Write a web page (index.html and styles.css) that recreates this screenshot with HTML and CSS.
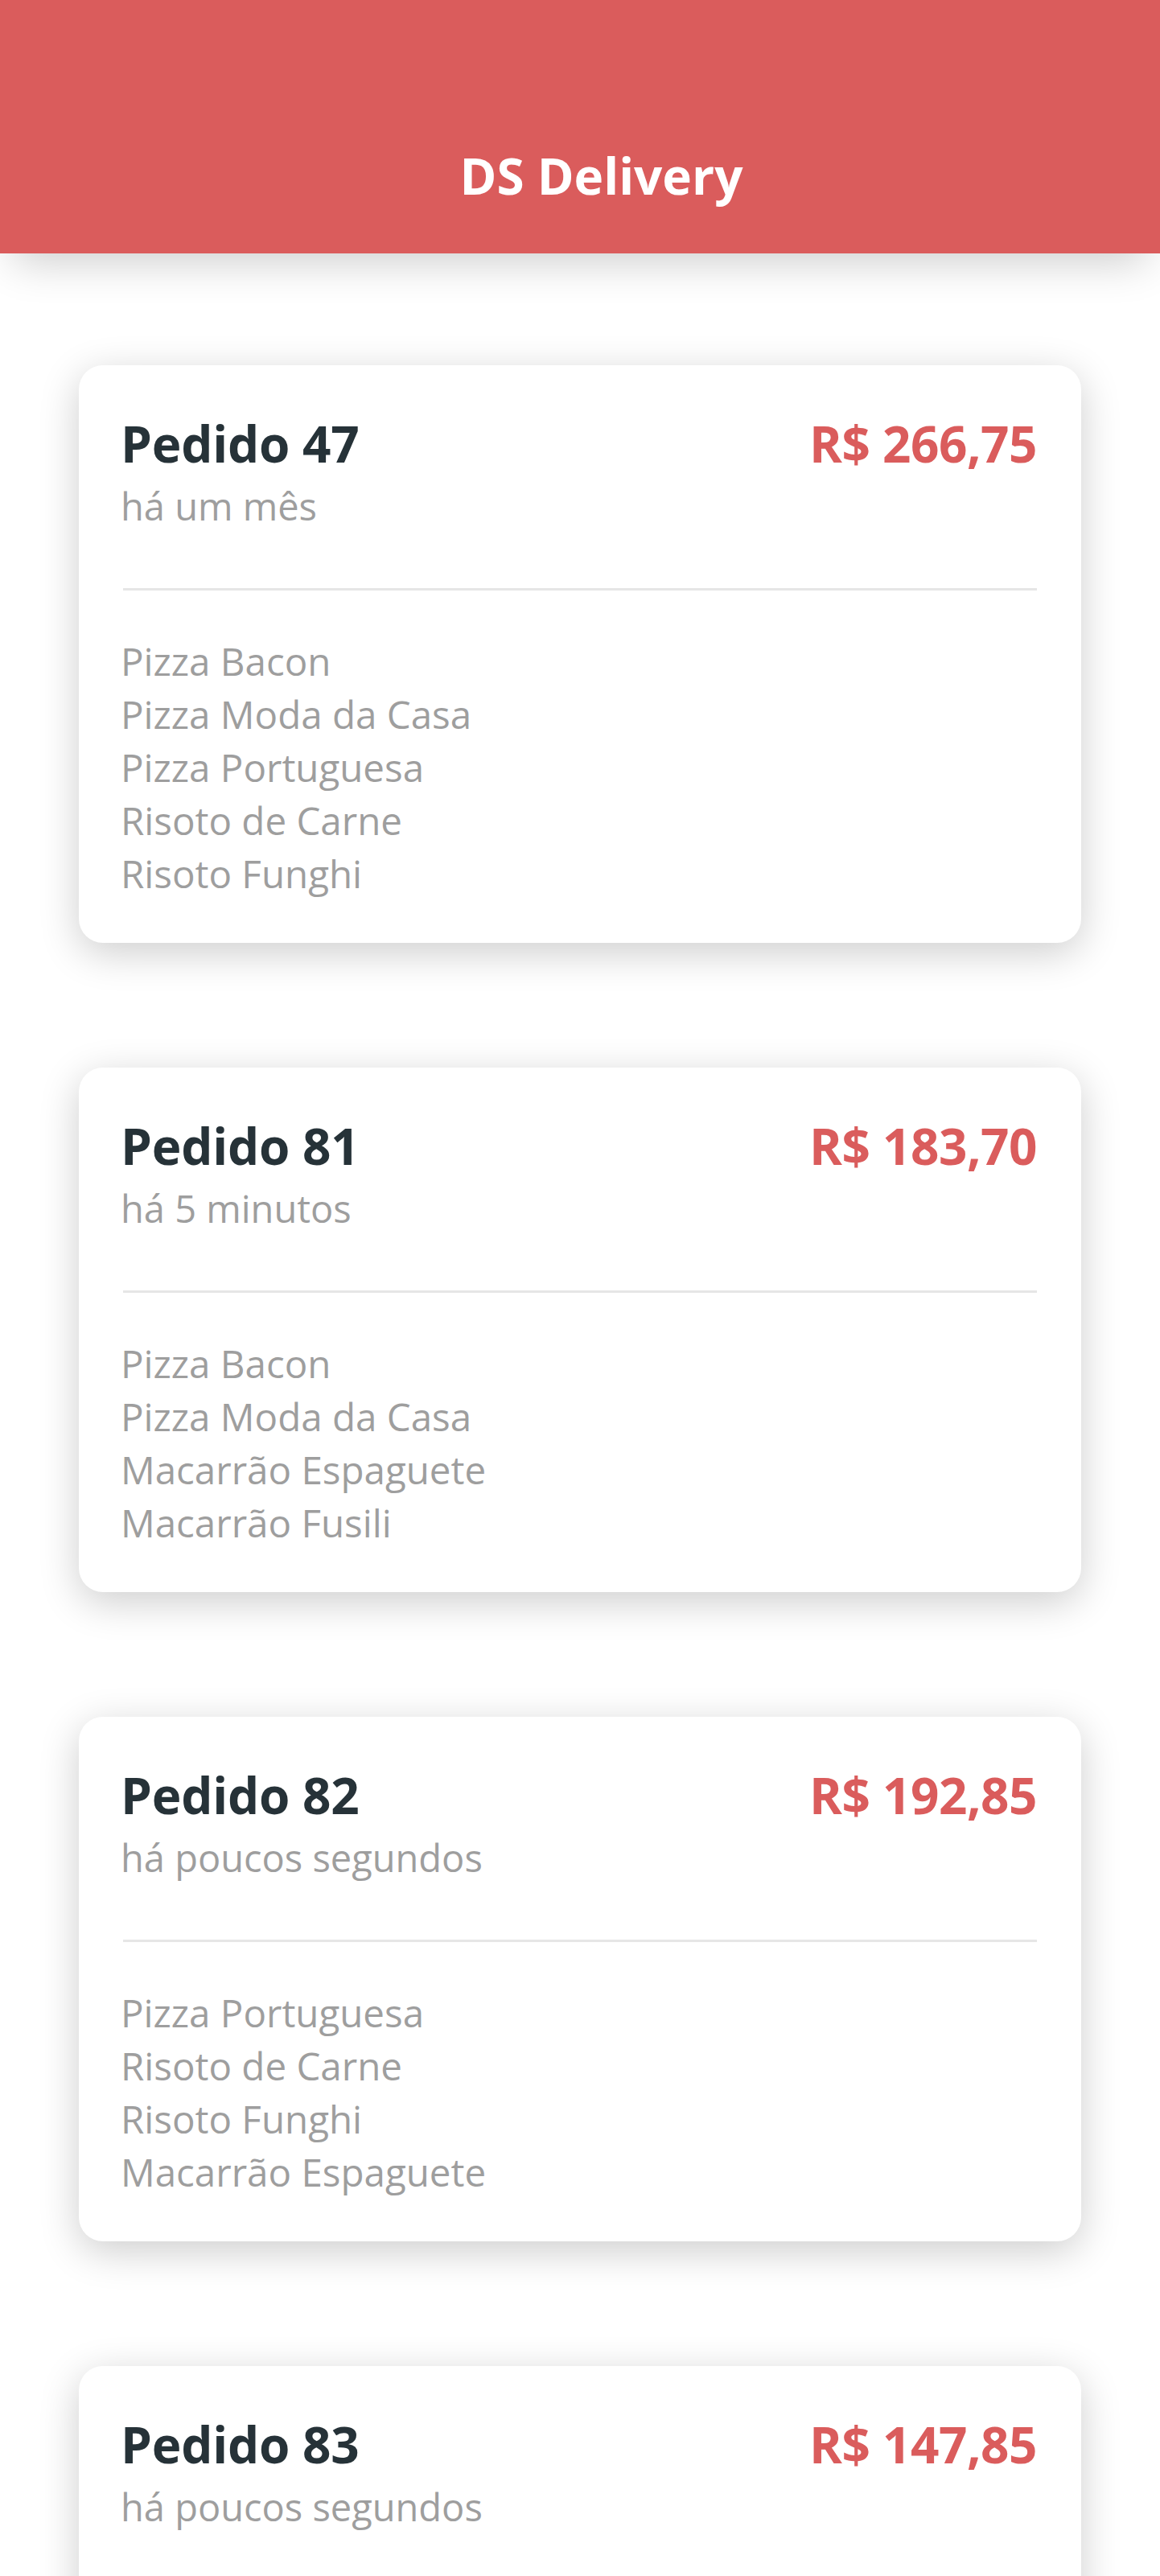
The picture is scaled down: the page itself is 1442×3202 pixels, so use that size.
FILE: index.html
```html
<!DOCTYPE html>
<html lang="pt-BR">
<head>
<meta charset="utf-8">
<title>DS Delivery</title>
<link rel="stylesheet" href="styles.css">
</head>
<body>
<header class="header">
  <h1 class="header-title">DS Delivery</h1>
</header>
<main class="orders">
  <article class="card">
    <div class="card-top">
      <h2 class="order-name">Pedido 47</h2>
      <span class="order-price">R$ 266,75</span>
    </div>
    <p class="order-time">há um mês</p>
    <hr class="divider">
    <ul class="items">
      <li>Pizza Bacon</li>
      <li>Pizza Moda da Casa</li>
      <li>Pizza Portuguesa</li>
      <li>Risoto de Carne</li>
      <li>Risoto Funghi</li>
    </ul>
  </article>
  <article class="card">
    <div class="card-top">
      <h2 class="order-name">Pedido 81</h2>
      <span class="order-price">R$ 183,70</span>
    </div>
    <p class="order-time">há 5 minutos</p>
    <hr class="divider">
    <ul class="items">
      <li>Pizza Bacon</li>
      <li>Pizza Moda da Casa</li>
      <li>Macarrão Espaguete</li>
      <li>Macarrão Fusili</li>
    </ul>
  </article>
  <article class="card">
    <div class="card-top">
      <h2 class="order-name">Pedido 82</h2>
      <span class="order-price">R$ 192,85</span>
    </div>
    <p class="order-time">há poucos segundos</p>
    <hr class="divider">
    <ul class="items">
      <li>Pizza Portuguesa</li>
      <li>Risoto de Carne</li>
      <li>Risoto Funghi</li>
      <li>Macarrão Espaguete</li>
    </ul>
  </article>
  <article class="card">
    <div class="card-top">
      <h2 class="order-name">Pedido 83</h2>
      <span class="order-price">R$ 147,85</span>
    </div>
    <p class="order-time">há poucos segundos</p>
    <hr class="divider">
    <ul class="items">
      <li>Pizza Bacon</li>
      <li>Risoto Funghi</li>
      <li>Macarrão Fusili</li>
    </ul>
  </article>
</main>
</body>
</html>
```
FILE: styles.css
```css
* { box-sizing: border-box; }
html, body {
  margin: 0;
  padding: 0;
  background: #ffffff;
  font-family: "Open Sans", "Noto Sans", sans-serif;
}
body { overflow: hidden; }

.header {
  position: relative;
  z-index: 1;
  height: 315px;
  padding-top: 175px;
  padding-left: 53px;
  background: #da5c5c;
  box-shadow: 0 26px 50px -16px rgba(0, 0, 0, 0.2);
}
.header-title {
  margin: 0;
  text-align: center;
  color: #ffffff;
  font-size: 62px;
  line-height: 86px;
  font-weight: 700;
}

.orders {
  display: flex;
  flex-direction: column;
  gap: 155px;
  padding: 139px 98px 0 98px;
}

.card {
  background: #ffffff;
  border-radius: 30px;
  padding: 57px 55px 53px 52px;
  box-shadow: 0 12px 50px rgba(0, 0, 0, 0.2);
}
.card-top {
  display: flex;
  justify-content: space-between;
  align-items: baseline;
}
.order-name, .order-price {
  margin: 0;
  font-size: 62px;
  line-height: 80px;
  font-weight: 700;
}
.order-name { color: #263238; letter-spacing: -0.2px; }
.order-price { color: #da5c5c; letter-spacing: -0.5px; }

.order-time {
  margin: 5px 0 0 0;
  font-size: 47px;
  line-height: 66px;
  color: #9e9e9e;
}
.divider {
  margin: 69px 0 55px 3px;
  border: 0;
  height: 3px;
  background: #e6e6e6;
}
.items {
  list-style: none;
  margin: 0;
  padding: 0;
}
.items li {
  font-size: 47.5px;
  line-height: 66px;
  color: #9e9e9e;
}
```
